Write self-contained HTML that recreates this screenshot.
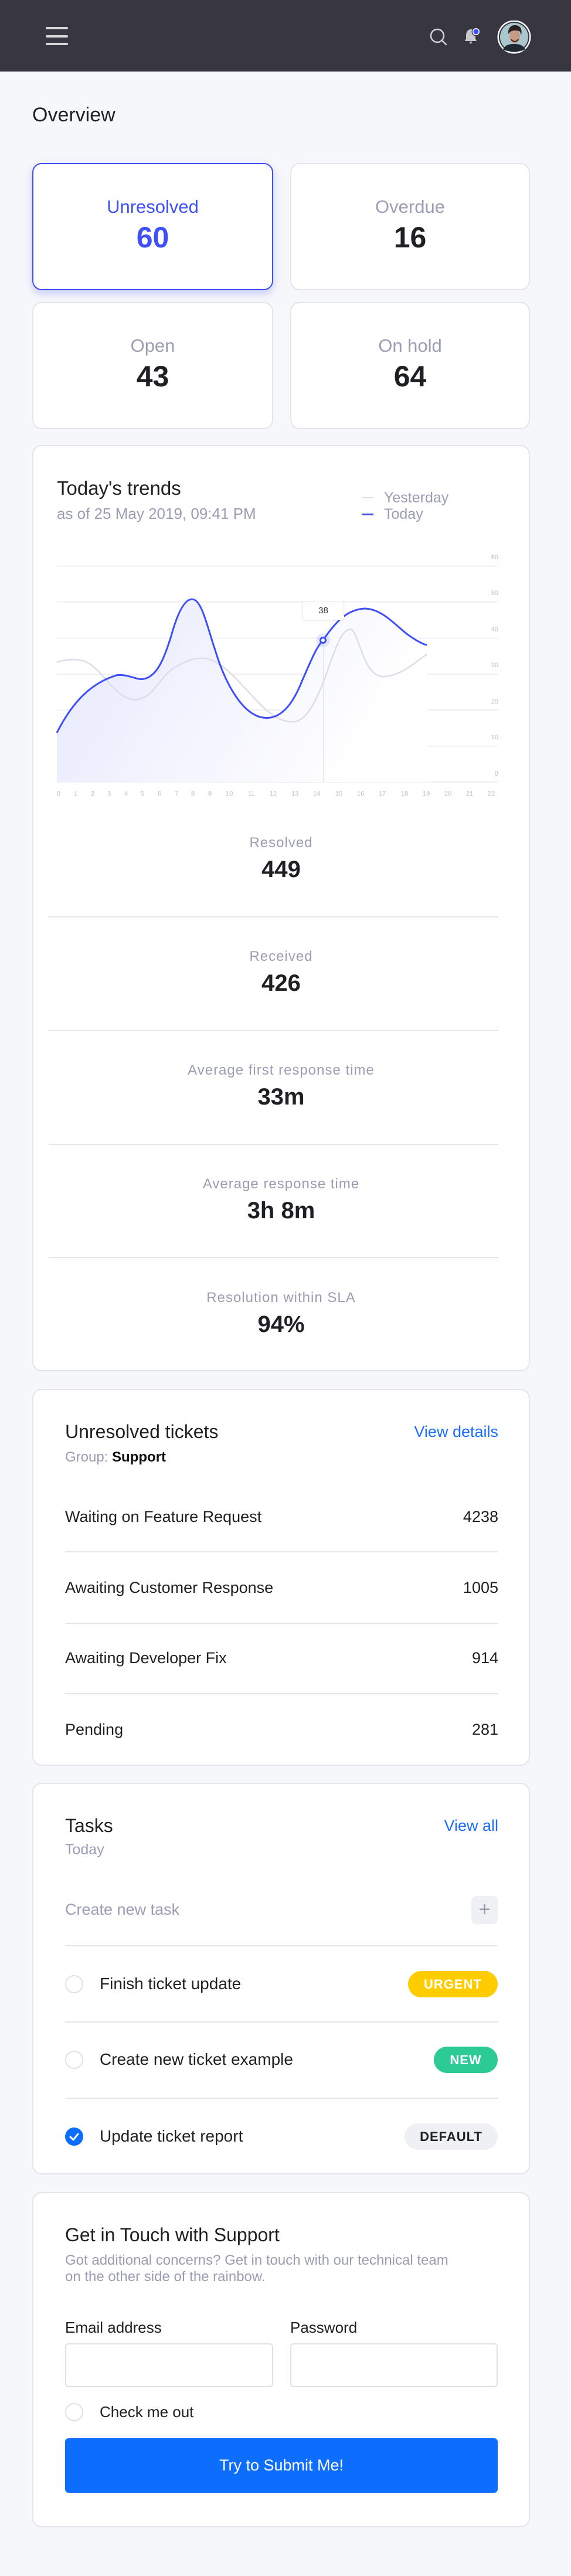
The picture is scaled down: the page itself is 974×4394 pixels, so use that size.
<!DOCTYPE html>
<html><head><meta charset="utf-8">
<style>
*{margin:0;padding:0;box-sizing:border-box}
body{width:974px;height:4394px;background:#f6f7fb;font-family:"Liberation Sans",sans-serif;position:relative;overflow:hidden;color:#1f2024}
.a{position:absolute}
.t{position:absolute;white-space:nowrap;line-height:1}
.card{position:absolute;background:#fff;border:2px solid #e3e5eb;border-radius:16px}
.c{text-align:center}
.g{color:#9b9db3}
.hr{position:absolute;height:2px;background:#e4e6ec}
.circ{position:absolute;width:31px;height:31px;border-radius:50%;border:2px solid #dfe1e7;background:#fff}
.badge{position:absolute;height:45px;border-radius:23px;font-weight:700;font-size:22px;letter-spacing:1px;line-height:45px;text-align:center}
</style></head><body>

<!-- header -->
<div class="a" style="left:0;top:0;width:974px;height:122px;background:#373641"></div>
<div class="a" style="left:78px;top:46px;width:38px;height:4px;background:#d7d7dc;border-radius:2px"></div>
<div class="a" style="left:78px;top:60px;width:38px;height:4px;background:#d7d7dc;border-radius:2px"></div>
<div class="a" style="left:78px;top:73px;width:38px;height:4px;background:#d7d7dc;border-radius:2px"></div>
<svg class="a" style="left:720px;top:35px" width="220" height="60" viewBox="720 35 220 60">
 <circle cx="746" cy="61" r="11" fill="none" stroke="#cfcfd6" stroke-width="2.5"/>
 <line x1="754" y1="69" x2="761" y2="76" stroke="#cfcfd6" stroke-width="2.5" stroke-linecap="round"/>
 <path d="M793,70 L795,66 L795,60 C795,54 799,50 803,50 C808,50 811,54 811,60 L811,66 L813,70 Z" fill="#c8c8cf"/>
 <path d="M800,71 L806,71 L803,75 Z" fill="#c8c8cf"/>
 <circle cx="812" cy="54" r="7.5" fill="#373641"/>
 <circle cx="812" cy="54" r="6" fill="#fff"/>
 <circle cx="812" cy="54" r="4.5" fill="#3a50ff"/>
 <circle cx="877" cy="63" r="28.5" fill="#fff"/>
 <circle cx="877" cy="63" r="26" fill="#373641"/>
 <circle cx="877" cy="63" r="24" fill="#a9c7cc"/>
 <path d="M858,84 C862,76 870,75 877,75 C884,75 892,76 896,84 C890,88 884,87 877,87 C870,87 864,88 858,84Z" fill="#1f2a33"/>
 <ellipse cx="878" cy="62" rx="9" ry="12" fill="#c79a86"/>
 <path d="M867,58 C866,46 874,42 880,43 C888,44 891,50 889,60 L887,54 C882,51 872,51 869,56 Z" fill="#2a2220"/>
 <path d="M872,67 C875,72 881,72 884,67" stroke="#3a2a25" stroke-width="2" fill="none"/>
</svg>

<div class="t" style="left:55px;top:179px;font-size:34px;color:#1f2024">Overview</div>

<!-- stat cards -->
<div class="card" style="left:55px;top:278px;width:411px;height:217px;border-color:#3d4ff5;box-shadow:0 6px 14px rgba(61,79,245,.25)"></div>
<div class="t c" style="left:55px;width:411px;top:337px;font-size:31px;color:#3d4ff5">Unresolved</div>
<div class="t c" style="left:55px;width:411px;top:380px;font-size:50px;color:#3d4ff5;font-weight:600">60</div>
<div class="card" style="left:495px;top:278px;width:409px;height:217px"></div>
<div class="t c g" style="left:495px;width:409px;top:337px;font-size:31px">Overdue</div>
<div class="t c" style="left:495px;width:409px;top:380px;font-size:50px;font-weight:600">16</div>
<div class="card" style="left:55px;top:515px;width:411px;height:217px"></div>
<div class="t c g" style="left:55px;width:411px;top:574px;font-size:31px">Open</div>
<div class="t c" style="left:55px;width:411px;top:617px;font-size:50px;font-weight:600">43</div>
<div class="card" style="left:495px;top:515px;width:409px;height:217px"></div>
<div class="t c g" style="left:495px;width:409px;top:574px;font-size:31px">On hold</div>
<div class="t c" style="left:495px;width:409px;top:617px;font-size:50px;font-weight:600">64</div>

<!-- trends card -->
<div class="card" style="left:55px;top:759px;width:849px;height:1580px"></div>
<div class="t" style="left:97px;top:816px;font-size:33px;font-weight:500">Today's trends</div>
<div class="t g" style="left:97px;top:863px;font-size:26px">as of 25 May 2019, 09:41 PM</div>
<div class="a" style="left:617px;top:848px;width:20px;height:2px;background:#dfe0ea"></div>
<div class="t g" style="left:655px;top:837px;font-size:25px">Yesterday</div>
<div class="a" style="left:617px;top:876px;width:20px;height:3px;background:#3d4ff5"></div>
<div class="t g" style="left:655px;top:865px;font-size:25px">Today</div>

<svg class="a" style="left:0;top:750px" width="974" height="700" viewBox="0 0 1568 1568" preserveAspectRatio="none">
 <defs>
  <linearGradient id="fg" x1="0" y1="0" x2="1" y2="0.3">
   <stop offset="0" stop-color="#e6e8fc"/>
   <stop offset="1" stop-color="#ffffff"/>
  </linearGradient>
 </defs>
 <g stroke="#eef0f4" stroke-width="2">
  <line x1="156" x2="1368" y1="483" y2="483" vector-effect="non-scaling-stroke"/>
  <line x1="156" x2="1368" y1="620" y2="620" vector-effect="non-scaling-stroke"/>
  <line x1="156" x2="1368" y1="758" y2="758" vector-effect="non-scaling-stroke"/>
  <line x1="156" x2="1368" y1="896" y2="896" vector-effect="non-scaling-stroke"/>
  <line x1="156" x2="1368" y1="1033" y2="1033" vector-effect="non-scaling-stroke"/>
  <line x1="156" x2="1368" y1="1171" y2="1171" vector-effect="non-scaling-stroke"/>
  <line x1="156" x2="1368" y1="1308" y2="1308" vector-effect="non-scaling-stroke"/>
 </g>
 <path d="M156,1120 C200,1000 250,930 320,900 C350,895 370,915 390,915 C430,910 450,840 470,750 C490,650 510,605 530,610 C555,615 570,720 590,800 C620,940 670,1060 730,1063 C780,1065 810,990 830,920 C855,840 870,790 887,766 C920,700 950,650 1000,645 C1050,645 1090,715 1120,745 C1140,765 1160,780 1172,785 L1172,1308 L156,1308 Z" fill="url(#fg)"/>
 <line x1="888" y1="766" x2="888" y2="1308" stroke="#e6e7ee" stroke-width="1.5" vector-effect="non-scaling-stroke"/>
 <path d="M156,850 C180,840 220,830 250,860 C290,900 320,990 370,993 C420,995 440,900 480,870 C510,845 530,835 555,835 C600,835 640,900 700,990 C740,1050 770,1078 805,1078 C840,1078 870,1000 900,880 C925,780 940,725 962,725 C985,725 995,900 1050,905 C1100,905 1140,850 1172,820" fill="none" stroke="#dcdde8" stroke-width="2.5" vector-effect="non-scaling-stroke"/>
 <path d="M156,1120 C200,1000 250,930 320,900 C350,895 370,915 390,915 C430,910 450,840 470,750 C490,650 510,605 530,610 C555,615 570,720 590,800 C620,940 670,1060 730,1063 C780,1065 810,990 830,920 C855,840 870,790 887,766 C920,700 950,650 1000,645 C1050,645 1090,715 1120,745 C1140,765 1160,780 1172,785" fill="none" stroke="#3d4ff5" stroke-width="3" vector-effect="non-scaling-stroke"/>
</svg>
<!-- y labels -->
<div class="t" style="left:820px;width:30px;text-align:right;top:946px;font-size:11px;color:#b9bbc8">60</div>
<div class="t" style="left:820px;width:30px;text-align:right;top:1007px;font-size:11px;color:#b9bbc8">50</div>
<div class="t" style="left:820px;width:30px;text-align:right;top:1069px;font-size:11px;color:#b9bbc8">40</div>
<div class="t" style="left:820px;width:30px;text-align:right;top:1130px;font-size:11px;color:#b9bbc8">30</div>
<div class="t" style="left:820px;width:30px;text-align:right;top:1192px;font-size:11px;color:#b9bbc8">20</div>
<div class="t" style="left:820px;width:30px;text-align:right;top:1253px;font-size:11px;color:#b9bbc8">10</div>
<div class="t" style="left:820px;width:30px;text-align:right;top:1315px;font-size:11px;color:#b9bbc8">0</div>
<!-- x labels -->
<div class="a" style="left:0;top:1349px;font-size:11px;color:#b9bbc8;line-height:1">
<span class="t" style="left:97px">0</span><span class="t" style="left:126px">1</span><span class="t" style="left:155px">2</span><span class="t" style="left:183px">3</span><span class="t" style="left:212px">4</span><span class="t" style="left:240px">5</span><span class="t" style="left:269px">6</span><span class="t" style="left:298px">7</span><span class="t" style="left:326px">8</span><span class="t" style="left:355px">9</span><span class="t" style="left:385px">10</span><span class="t" style="left:423px">11</span><span class="t" style="left:460px">12</span><span class="t" style="left:497px">13</span><span class="t" style="left:534px">14</span><span class="t" style="left:572px">15</span><span class="t" style="left:609px">16</span><span class="t" style="left:646px">17</span><span class="t" style="left:684px">18</span><span class="t" style="left:721px">19</span><span class="t" style="left:758px">20</span><span class="t" style="left:795px">21</span><span class="t" style="left:832px">22</span>
</div>
<!-- tooltip & marker -->
<div class="a" style="left:516px;top:1025px;width:71px;height:33px;background:#fff;border:1px solid #e8e9ef;border-radius:4px;box-shadow:0 1px 3px rgba(0,0,0,.06);font-size:15px;line-height:31px;text-align:center;color:#333">38</div>
<div class="a" style="left:539px;top:1080px;width:24px;height:24px;border-radius:50%;background:rgba(61,79,245,.12)"></div>
<div class="a" style="left:545px;top:1086px;width:12px;height:12px;border-radius:50%;background:#fff;border:3px solid #3d4ff5"></div>

<!-- stats -->
<div class="t c g" style="left:55px;width:849px;top:1426px;font-size:24px;letter-spacing:1px">Resolved</div>
<div class="t c" style="left:55px;width:849px;top:1463px;font-size:40px;font-weight:600">449</div>
<div class="hr" style="left:83px;width:767px;top:1563px"></div>
<div class="t c g" style="left:55px;width:849px;top:1620px;font-size:24px;letter-spacing:1px">Received</div>
<div class="t c" style="left:55px;width:849px;top:1657px;font-size:40px;font-weight:600">426</div>
<div class="hr" style="left:83px;width:767px;top:1757px"></div>
<div class="t c g" style="left:55px;width:849px;top:1814px;font-size:24px;letter-spacing:1px">Average first response time</div>
<div class="t c" style="left:55px;width:849px;top:1851px;font-size:40px;font-weight:600">33m</div>
<div class="hr" style="left:83px;width:767px;top:1951px"></div>
<div class="t c g" style="left:55px;width:849px;top:2008px;font-size:24px;letter-spacing:1px">Average response time</div>
<div class="t c" style="left:55px;width:849px;top:2045px;font-size:40px;font-weight:600">3h 8m</div>
<div class="hr" style="left:83px;width:767px;top:2144px"></div>
<div class="t c g" style="left:55px;width:849px;top:2202px;font-size:24px;letter-spacing:1px">Resolution within SLA</div>
<div class="t c" style="left:55px;width:849px;top:2239px;font-size:40px;font-weight:600">94%</div>

<!-- unresolved tickets -->
<div class="card" style="left:55px;top:2369px;width:849px;height:643px"></div>
<div class="t" style="left:111px;top:2426px;font-size:32px;font-weight:500">Unresolved tickets</div>
<div class="t" style="right:124px;top:2429px;font-size:27px;color:#1a6dff">View details</div>
<div class="t" style="left:111px;top:2474px;font-size:24px"><span class="g">Group:</span> <span style="color:#111;font-weight:600">Support</span></div>
<div class="t" style="left:111px;top:2574px;font-size:27px">Waiting on Feature Request</div>
<div class="t" style="right:124px;top:2574px;font-size:27px">4238</div>
<div class="hr" style="left:111px;width:739px;top:2646px"></div>
<div class="t" style="left:111px;top:2695px;font-size:27px">Awaiting Customer Response</div>
<div class="t" style="right:124px;top:2695px;font-size:27px">1005</div>
<div class="hr" style="left:111px;width:739px;top:2768px"></div>
<div class="t" style="left:111px;top:2815px;font-size:27px">Awaiting Developer Fix</div>
<div class="t" style="right:124px;top:2815px;font-size:27px">914</div>
<div class="hr" style="left:111px;width:739px;top:2888px"></div>
<div class="t" style="left:111px;top:2937px;font-size:27px">Pending</div>
<div class="t" style="right:124px;top:2937px;font-size:27px">281</div>

<!-- tasks -->
<div class="card" style="left:55px;top:3041px;width:849px;height:668px"></div>
<div class="t" style="left:111px;top:3098px;font-size:32px;font-weight:500">Tasks</div>
<div class="t" style="right:124px;top:3101px;font-size:27px;color:#1a6dff">View all</div>
<div class="t g" style="left:111px;top:3143px;font-size:25px">Today</div>
<div class="t g" style="left:111px;top:3244px;font-size:27px">Create new task</div>
<div class="a" style="left:804px;top:3234px;width:45px;height:48px;background:#eef0f4;border-radius:8px;color:#9b9db3;font-size:34px;line-height:46px;text-align:center">+</div>
<div class="hr" style="left:111px;width:739px;top:3318px"></div>
<div class="circ" style="left:111px;top:3369px"></div>
<div class="t" style="left:170px;top:3370px;font-size:28px">Finish ticket update</div>
<div class="badge" style="left:696px;top:3362px;width:153px;background:#ffcc00;color:#fff">URGENT</div>
<div class="hr" style="left:111px;width:739px;top:3448px"></div>
<div class="circ" style="left:111px;top:3498px"></div>
<div class="t" style="left:170px;top:3499px;font-size:28px">Create new ticket example</div>
<div class="badge" style="left:740px;top:3491px;width:109px;background:#2ccb95;color:#fff">NEW</div>
<div class="hr" style="left:111px;width:739px;top:3578px"></div>
<div class="a" style="left:111px;top:3629px;width:31px;height:31px;border-radius:50%;background:#0d6efd"></div>
<svg class="a" style="left:111px;top:3629px" width="31" height="31"><path d="M9,16 L14,21 L22,11" fill="none" stroke="#fff" stroke-width="3" stroke-linecap="round" stroke-linejoin="round"/></svg>
<div class="t" style="left:170px;top:3630px;font-size:28px">Update ticket report</div>
<div class="badge" style="left:690px;top:3622px;width:159px;background:#eef0f4;color:#222">DEFAULT</div>

<!-- form -->
<div class="card" style="left:55px;top:3739px;width:849px;height:572px"></div>
<div class="t" style="left:111px;top:3796px;font-size:32px;font-weight:500">Get in Touch with Support</div>
<div class="a g" style="left:111px;top:3842px;width:760px;font-size:24px;line-height:28px;white-space:nowrap">Got additional concerns? Get in touch with our technical team<br>on the other side of the rainbow.</div>
<div class="t" style="left:111px;top:3957px;font-size:26px">Email address</div>
<div class="t" style="left:495px;top:3957px;font-size:26px">Password</div>
<div class="a" style="left:111px;top:3997px;width:355px;height:75px;border:2px solid #dfe1e7;border-radius:6px;background:#fff"></div>
<div class="a" style="left:495px;top:3997px;width:354px;height:75px;border:2px solid #dfe1e7;border-radius:6px;background:#fff"></div>
<div class="circ" style="left:111px;top:4099px"></div>
<div class="t" style="left:170px;top:4101px;font-size:26px">Check me out</div>
<div class="a" style="left:111px;top:4159px;width:738px;height:93px;background:#0d6efd;border-radius:6px;color:#fff;font-size:27px;line-height:93px;text-align:center">Try to Submit Me!</div>

</body></html>
